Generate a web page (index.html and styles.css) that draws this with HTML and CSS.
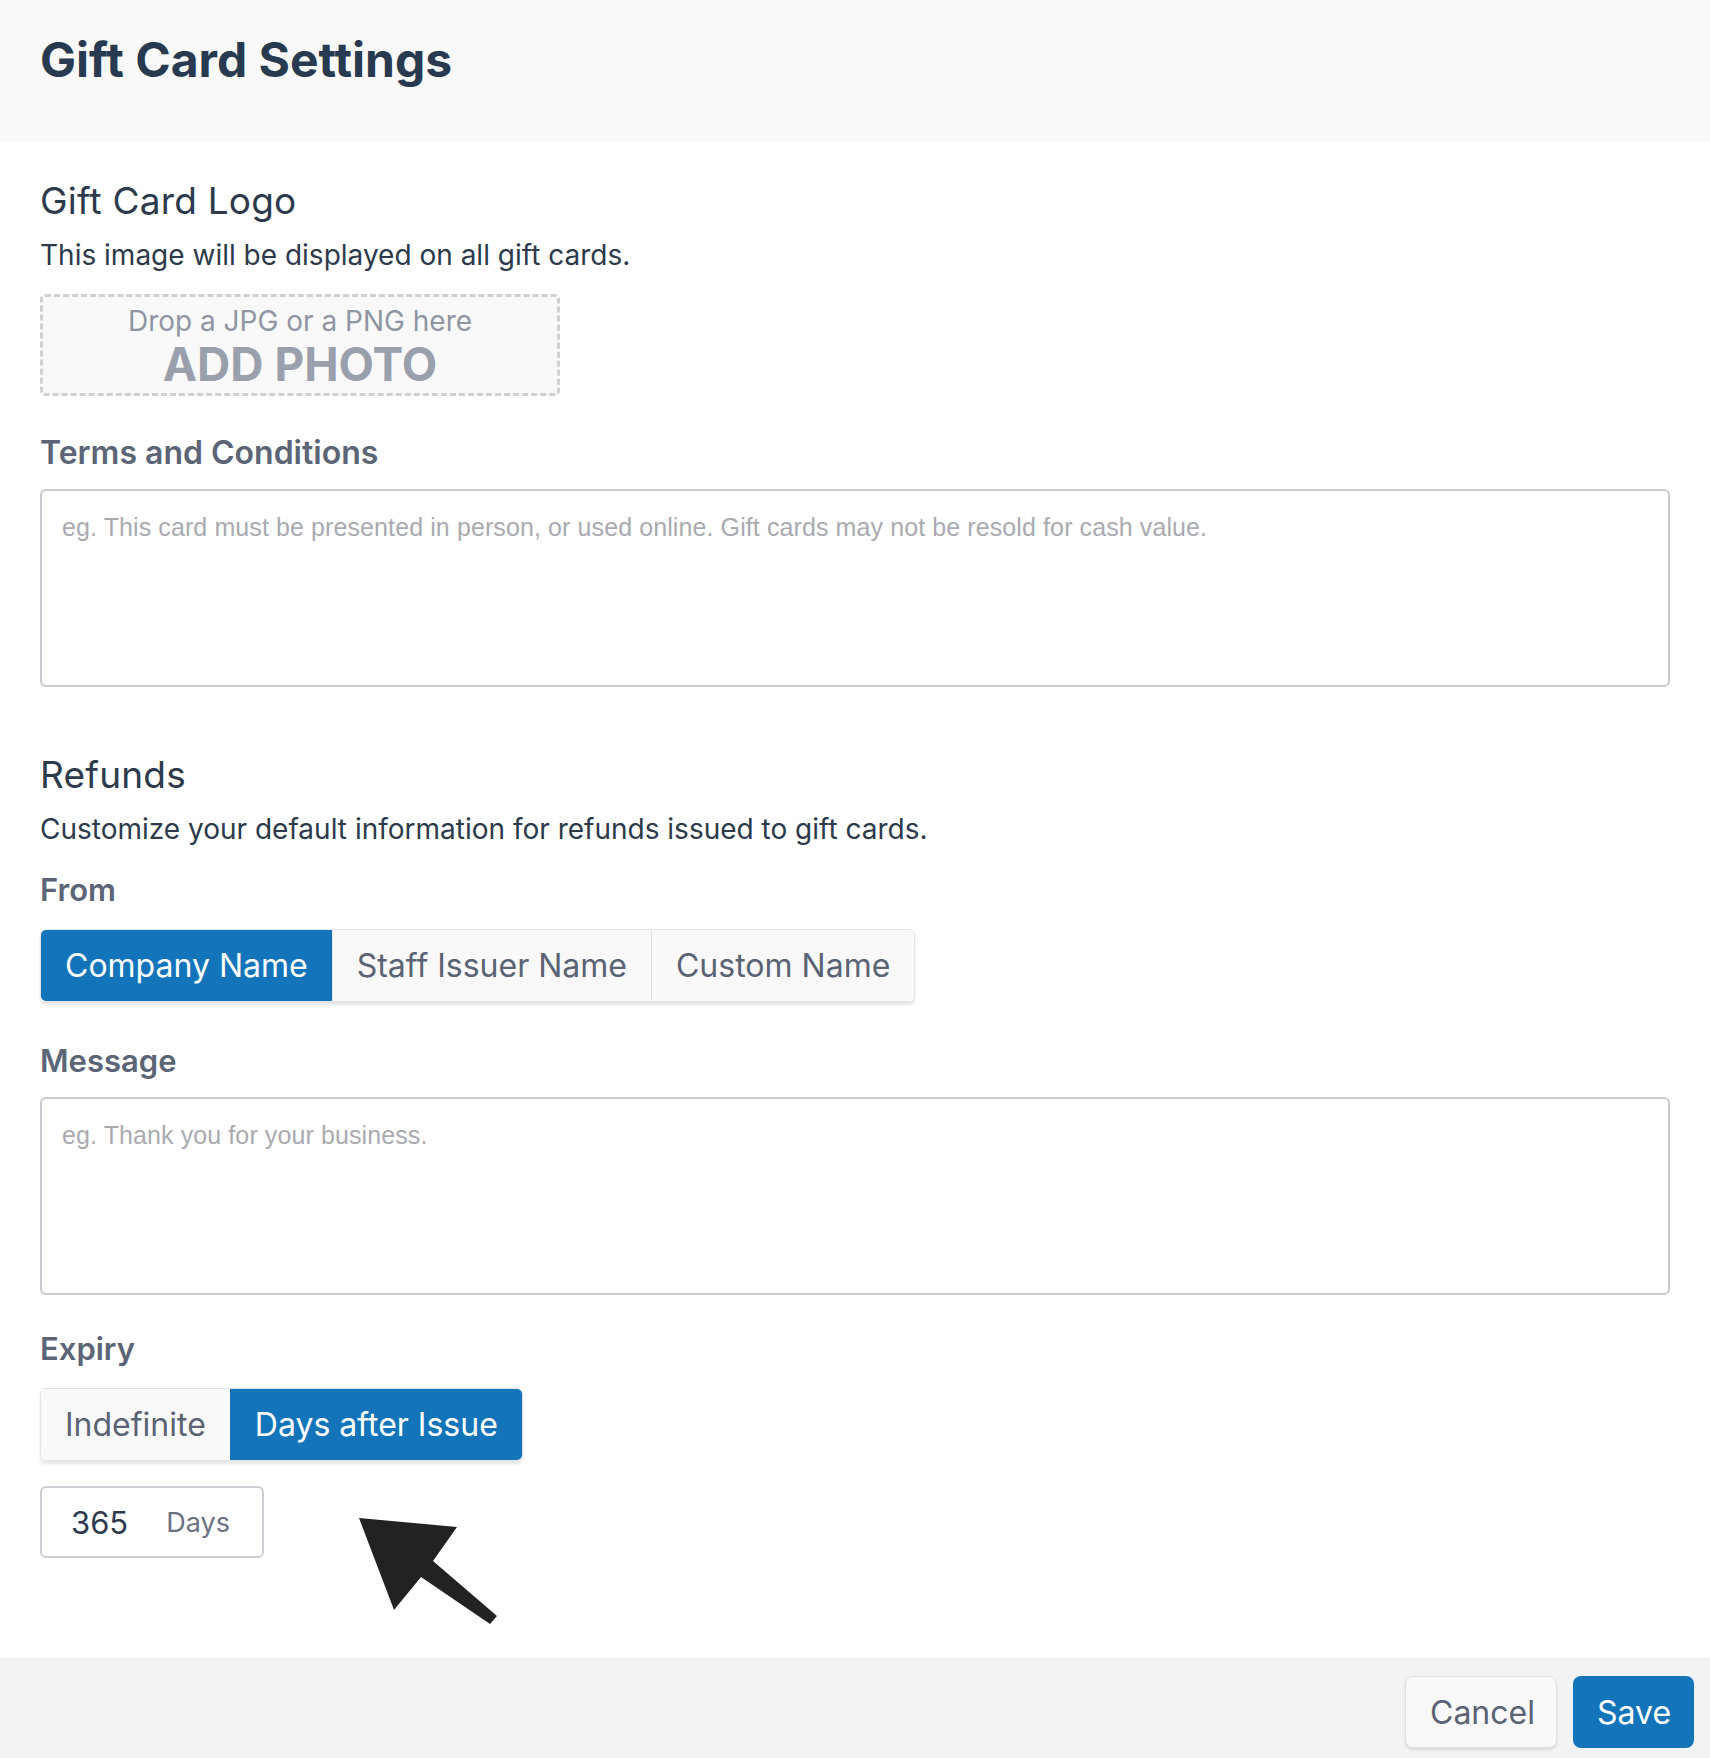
FILE: index.html
```html
<!DOCTYPE html>
<html lang="en">
<head>
    <meta charset="UTF-8">
    <meta name="viewport" content="width=device-width, initial-scale=1.0">
    <title>Gift Card Settings</title>
    <link rel="stylesheet" href="styles.css">
</head>
<body>
    <div class="page">
        <header class="page-header">
            <h1>Gift Card Settings</h1>
        </header>

        <main class="content">
            <h2 class="section-title">Gift Card Logo</h2>
            <p class="section-desc">This image will be displayed on all gift cards.</p>
            <div class="dropzone">
                <span class="dropzone-hint">Drop a JPG or a PNG here</span>
                <span class="dropzone-action">ADD PHOTO</span>
            </div>

            <label class="field-label label-terms">Terms and Conditions</label>
            <textarea class="text-box" placeholder="eg. This card must be presented in person, or used online. Gift cards may not be resold for cash value."></textarea>

            <h2 class="section-title title-refunds">Refunds</h2>
            <p class="section-desc">Customize your default information for refunds issued to gift cards.</p>

            <label class="field-label label-from">From</label>
            <div class="segmented">
                <button class="seg-btn active">Company Name</button>
                <button class="seg-btn">Staff Issuer Name</button>
                <button class="seg-btn">Custom Name</button>
            </div>

            <label class="field-label label-message">Message</label>
            <textarea class="text-box" placeholder="eg. Thank you for your business."></textarea>

            <label class="field-label label-expiry">Expiry</label>
            <div class="segmented">
                <button class="seg-btn">Indefinite</button>
                <button class="seg-btn active">Days after Issue</button>
            </div>

            <div class="expiry-row">
                <div class="days-input">
                    <span class="days-value">365</span>
                    <span class="days-unit">Days</span>
                </div>
                <!-- pointer arrow -->
                <svg class="pointer" width="160" height="130" viewBox="0 0 160 130">
                    <path d="M9 11 L107 20 L83 54 L147 109 L140 117 L71 70 L44 103 Z" fill="#222"/>
                </svg>
            </div>
        </main>

        <footer class="page-footer">
            <button class="btn btn-cancel">Cancel</button>
            <button class="btn btn-save">Save</button>
        </footer>
    </div>
</body>
</html>
```

FILE: styles.css
```css
* { box-sizing: border-box; }
body {
    margin: 0;
    font-family: Inter, "Open Sans", sans-serif;
    color: #2c3a4b;
    background: #fff;
}
.page {
    min-height: 100vh;
    display: flex;
    flex-direction: column;
}
.page-header {
    background: #f9f9f9;
    padding: 32px 40px 55px;
}
.page-header h1 {
    margin: 0;
    font-size: 48px;
    line-height: 55px;
    font-weight: 700;
    color: #283a4f;
}
.content {
    padding: 37px 40px 0;
    display: flex;
    flex-direction: column;
    align-items: flex-start;
}
.section-title {
    margin: 0;
    font-size: 37px;
    line-height: 44px;
    font-weight: 400;
    letter-spacing: 0.2px;
    color: #2c3a4b;
}
.title-refunds { margin-top: 66px; }
.section-desc {
    margin: 14px 0 0;
    font-size: 28px;
    line-height: 36px;
    color: #2c3a4b;
}
.dropzone {
    margin-top: 21px;
    width: 520px;
    height: 102px;
    border: 3px dashed #cfd0d4;
    border-radius: 5px;
    background: #f9f9fa;
    display: flex;
    flex-direction: column;
    align-items: center;
    justify-content: center;
    color: #8f96a2;
}
.dropzone-hint {
    font-size: 28px;
    line-height: 34px;
    margin-top: 4px;
}
.dropzone-action {
    font-size: 46px;
    line-height: 52px;
    font-weight: 700;
    color: #9aa0ab;
}
.field-label {
    display: block;
    font-size: 31px;
    line-height: 36px;
    font-weight: 600;
    color: #5b6576;
}
.label-terms {
    margin-top: 39px;
    font-size: 32px;
}
.label-from { margin-top: 25px; }
.label-message { margin-top: 41px; }
.label-expiry { margin-top: 36px; }
.text-box {
    margin-top: 18px;
    width: 100%;
    height: 198px;
    border: 2px solid #c9cacf;
    border-radius: 6px;
    padding: 21px 20px;
    font-family: "Liberation Sans", Arial, sans-serif;
    font-size: 25px;
    letter-spacing: 0.1px;
    line-height: 30px;
    color: #333;
    resize: none;
    background: #fff;
}
.text-box::placeholder { color: #a9abb0; }
.segmented {
    margin-top: 21px;
    display: flex;
    border: 1px solid #e2e3e7;
    border-radius: 6px;
    overflow: hidden;
    box-shadow: 0 3px 3px rgba(0,0,0,0.1);
}
.seg-btn {
    height: 71px;
    padding: 0 24px;
    border: none;
    border-left: 1px solid #e2e3e7;
    background: #f9f9fa;
    font-family: Inter, "Open Sans", sans-serif;
    font-size: 32px;
    color: #5a6373;
}
.seg-btn:first-child { border-left: none; }
.seg-btn.active {
    background: #1474b9;
    color: #fff;
    border-left-color: #1474b9;
}
.expiry-row {
    position: relative;
    margin-top: 25px;
    width: 100%;
}
.days-input {
    width: 224px;
    height: 72px;
    border: 2px solid #cdced3;
    border-radius: 6px;
    display: flex;
    align-items: center;
    padding-left: 29px;
}
.days-value {
    font-size: 31px;
    color: #2c3a4b;
}
.days-unit {
    margin-left: 38px;
    font-size: 27px;
    color: #6a7282;
}
.pointer {
    position: absolute;
    left: 310px;
    top: 21px;
}
.page-footer {
    margin-top: auto;
    height: 100px;
    background: #f2f3f5;
    display: flex;
    justify-content: flex-end;
    align-items: flex-start;
    gap: 16px;
    padding: 18px 16px 0 0;
}
.btn {
    height: 72px;
    padding: 0 24px;
    border-radius: 8px;
    font-family: Inter, "Open Sans", sans-serif;
    font-size: 32px;
    cursor: pointer;
}
.btn-cancel {
    width: 152px;
    background: #f9f9fa;
    border: 1px solid #e0e1e5;
    color: #5a6373;
    box-shadow: 0 2px 3px rgba(0,0,0,0.1);
}
.btn-save {
    width: 121px;
    background: #1474b9;
    border: none;
    color: #fff;
}
```
